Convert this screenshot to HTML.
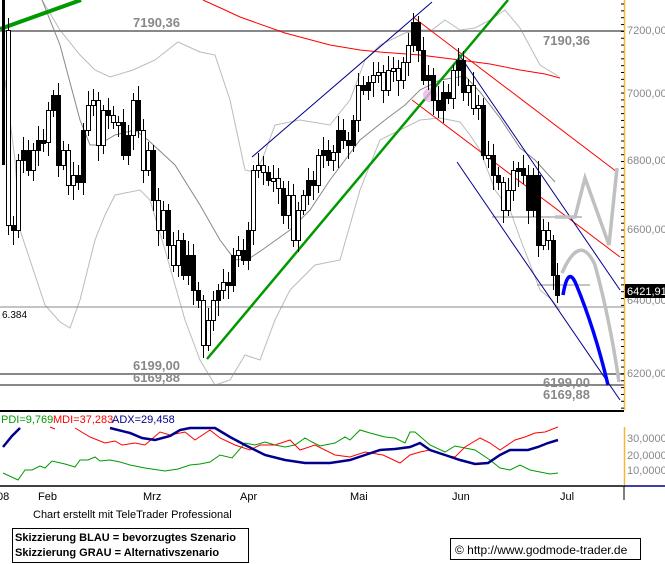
<!DOCTYPE html>
<html><head><meta charset="utf-8"><style>
body{margin:0;background:#fff;width:665px;height:564px;overflow:hidden;font-family:"Liberation Sans",sans-serif}
svg{position:absolute;left:0;top:0}
</style></head><body>
<svg id="s" width="665" height="564" viewBox="0 0 665 564" xmlns="http://www.w3.org/2000/svg" font-family="Liberation Sans, sans-serif">
<rect width="665" height="564" fill="#fff"/>
<polyline fill="none" stroke="#bbb" stroke-width="1" points="42,0 60,30 80,55 95,70 110,77 133,70 155,60 178,42 200,52 215,55 230,100 245,170 255,172 262,160 275,125 300,120 330,125 350,100 365,60 380,45 405,33 420,30 432,30 445,20 460,30 475,28 490,20 505,10 520,28 540,65 558,76"/>
<polyline fill="none" stroke="#888" stroke-width="1" points="42,0 60,45 80,120 90,145 98,145 115,135 135,130 148,140 175,165 200,205 220,240 235,260 250,258 262,250 290,230 310,210 330,180 345,160 360,140 385,120 405,105 420,90 440,80 465,76 480,92 500,118 520,148 535,160 555,182"/>
<polyline fill="none" stroke="#bbb" stroke-width="1" points="5,80 15,160 20,230 35,275 45,305 60,322 70,328 80,300 95,240 105,215 115,195 140,190 150,200 165,250 185,320 200,360 215,385 230,380 245,355 260,360 275,320 290,290 305,275 315,265 340,260 360,190 380,140 400,130 420,120 440,118 460,122 470,135 480,150 495,190 510,210 520,238 540,290 552,300 560,310"/>
<g stroke="#888" stroke-width="2"><line x1="0" y1="31" x2="624" y2="31"/><line x1="0" y1="374" x2="624" y2="374"/><line x1="0" y1="385" x2="624" y2="385"/></g>
<g stroke="#888" stroke-width="1"><line x1="0" y1="307" x2="624" y2="307"/><line x1="492" y1="217" x2="582" y2="217"/><line x1="537" y1="285" x2="590" y2="285"/></g>
<polyline fill="none" stroke="#f00" stroke-width="1" points="203,0 225,10 240,17 285,33 330,45 360,50 380,52 420,55 460,60 490,64 520,70 545,74 560,78"/>
<line x1="413" y1="17" x2="617" y2="172" stroke="#f00"/>
<line x1="412" y1="100" x2="620" y2="257" stroke="#f00"/>
<line x1="252" y1="157" x2="432" y2="2" stroke="#00008b"/>
<line x1="458" y1="53" x2="620" y2="290" stroke="#00008b"/>
<line x1="457" y1="162" x2="620" y2="400" stroke="#00008b"/>
<line x1="207" y1="359" x2="508" y2="0" stroke="#090" stroke-width="2.5"/>
<line x1="0" y1="29" x2="81" y2="0" stroke="#090" stroke-width="4"/>
<circle cx="430" cy="95" r="7" fill="#f3b3f0" opacity="0.8"/>
<g id="candles"></g>
<polyline fill="none" stroke="#c0c0c0" stroke-width="3.5" points="555,217 575,217 585,178 609,245 617,168"/>
<path d="M562,273 Q580,232 595,265 Q610,320 619,382" fill="none" stroke="#c0c0c0" stroke-width="3.5"/>
<path d="M563,295 Q568,265 576,284 Q595,330 608,385" fill="none" stroke="#00f" stroke-width="3.5"/>
<g fill="#888" font-weight="bold" font-size="13">
<text x="133" y="27">7190,36</text><text x="543" y="45">7190,36</text>
<text x="133" y="370">6199,00</text><text x="133" y="382">6169,88</text>
<text x="543" y="387">6199,00</text><text x="543" y="399">6169,88</text></g>
<text x="2" y="318" font-size="10" fill="#000">6.384</text>
<line x1="624.5" y1="0" x2="624.5" y2="410" stroke="#f5b830" stroke-width="1.5"/>
<g id="ticks"></g>
<g fill="#888" font-size="11"><text x="627" y="34">7200,00</text><text x="627" y="97">7000,00</text><text x="627" y="164">6800,00</text><text x="627" y="233">6600,00</text><text x="627" y="304">6400,00</text><text x="627" y="377">6200,00</text></g>
<rect x="625" y="284" width="40" height="14" fill="#000"/><text x="627" y="295" font-size="11" fill="#fff">6421,91</text>
<line x1="0" y1="411" x2="624" y2="411" stroke="#000" stroke-width="2"/>
<line x1="0" y1="486" x2="624" y2="486" stroke="#000" stroke-width="1.5"/>
<line x1="624.5" y1="427" x2="624.5" y2="486" stroke="#f5b830" stroke-width="1.5"/>
<line x1="624" y1="486" x2="665" y2="486" stroke="#00008b" stroke-width="1.5"/>
<line x1="624" y1="486" x2="624" y2="500" stroke="#000"/>
<g fill="#888" font-size="11"><text x="627" y="442">30,0000</text><text x="627" y="459">20,0000</text><text x="627" y="474">10,0000</text></g>
<g font-size="11"><text x="1" y="423" fill="#090">PDI=9,769</text><text x="53" y="423" fill="#f00">MDI=37,283</text><text x="112" y="423" fill="#00008b">ADX=29,458</text></g>
<polyline fill="none" stroke="#090" points="3,473 18,480 25,470 32,470 40,466 45,468 52,461 65,464 75,467 80,460 88,460 95,457 100,461 110,460 120,462 130,465 145,468 165,471 178,469 190,465 200,464 210,462 220,455 232,458 245,443 255,445 265,442 275,445 285,447 295,445 305,438 312,442 320,446 335,443 345,437 350,440 360,430 370,433 385,437 395,438 405,443 410,432 415,432 430,445 445,452 455,446 465,448 475,450 490,460 500,468 510,470 520,465 530,470 540,472 550,474 558,473"/>
<polyline fill="none" stroke="#f00" points="50,427 55,429"/>
<polyline fill="none" stroke="#f00" points="75,428 90,437 105,443 115,441 122,445 135,443 145,445 160,432 170,435 185,432 195,440 210,430 220,438 235,445 250,450 260,445 275,445 290,440 300,450 315,445 335,455 350,457 365,452 383,455 400,463 410,455 420,452 430,450 443,455 455,457 465,447 480,438 490,443 500,450 515,440 525,437 535,433 545,432 558,427"/>
<polyline fill="none" stroke="#00008b" stroke-width="2.5" points="3,447 12,436 20,428"/>
<polyline fill="none" stroke="#00008b" stroke-width="2.5" points="110,428 130,433 142,438 155,440 170,436 180,430 190,428 215,428 230,437 245,445 265,455 285,460 305,463 330,463 350,460 365,455 380,450 395,449 410,447 420,443 430,450 445,455 460,460 475,464 488,463 500,455 510,450 528,450 538,447 548,443 558,440"/>
<g font-size="11" fill="#000"><text x="-3" y="500">08</text><text x="38" y="500">Feb</text><text x="143" y="500">Mrz</text><text x="240" y="500">Apr</text><text x="350" y="500">Mai</text><text x="452" y="500">Jun</text><text x="560" y="500">Jul</text>
<text x="33" y="518">Chart erstellt mit TeleTrader Professional</text></g>
<rect x="12.5" y="528.5" width="236" height="34" fill="none" stroke="#000"/>
<g font-size="11" font-weight="bold"><text x="15" y="541">Skizzierung BLAU = bevorzugtes Szenario</text><text x="15" y="556">Skizzierung GRAU = Alternativszenario</text></g>
<rect x="450.5" y="538.5" width="190" height="21" fill="none" stroke="#000"/>
<text x="455" y="554" font-size="12">© http://www.godmode-trader.de</text>
</svg>
<script>
(function(){
var NS="http://www.w3.org/2000/svg",g=document.getElementById("candles"),tk=document.getElementById("ticks");
var pts=[[3,30],[8,225],[13,230],[18,160],[23,150],[28,170],[33,150],[38,140],[43,142],[48,110],[53,95],[58,165],[63,150],[68,185],[73,175],[78,182],[83,130],[88,105],[93,100],[98,145],[103,110],[108,115],[113,122],[118,122],[123,155],[128,135],[133,100],[138,130],[143,170],[148,150],[153,200],[158,230],[163,210],[168,245],[173,265],[178,240],[183,275],[188,255],[193,290],[198,300],[203,345],[208,320],[213,300],[218,290],[223,282],[228,285],[233,255],[238,250],[243,260],[248,230],[253,170],[258,165],[263,172],[268,180],[273,178],[278,188],[283,215],[288,195],[293,240],[298,210],[303,195],[308,180],[313,185],[318,155],[323,150],[328,160],[333,152],[338,130],[343,140],[348,145],[353,120],[358,85],[363,90],[368,82],[373,75],[378,72],[383,90],[388,70],[393,68],[398,80],[403,62],[408,45],[413,22],[418,50],[423,80],[428,75],[433,100],[438,110],[443,92],[448,98],[453,70],[458,60],[463,92],[468,85],[473,108],[478,105],[483,155],[488,155],[493,175],[498,182],[503,210],[508,190],[513,170],[518,168],[523,175],[528,210],[533,175],[538,245],[543,230],[548,240],[553,275],[557,295]];
function el(n,a){var e=document.createElementNS(NS,n);for(var k in a)e.setAttribute(k,a[k]);return e}
for(var i=1;i<pts.length;i++){var x=pts[i][0],o=pts[i-1][1],c=pts[i][1];if(i%3==1){var tmp=o;o=c;c=tmp}
var ty=Math.min(o,c),by=Math.max(o,c);if(by-ty<3){by=ty+3}
var w1=5+((i*7)%10),w2=5+((i*5)%12);
g.appendChild(el("line",{x1:x+.5,y1:ty-w1,x2:x+.5,y2:by+w2,stroke:"#000"}));
var black=c>o;g.appendChild(el("rect",{x:x-1.5,y:ty+.5,width:4,height:by-ty,fill:black?"#000":"#fff",stroke:"#000","stroke-width":1}))}
g.appendChild(el("line",{x1:3.5,y1:0,x2:3.5,y2:165,stroke:"#000","stroke-width":3}));
for(var y=4;y<410;y+=6.85){tk.appendChild(el("line",{x1:621,y1:y,x2:624,y2:y,stroke:"#000"}))}
})();
</script>
</body></html>
